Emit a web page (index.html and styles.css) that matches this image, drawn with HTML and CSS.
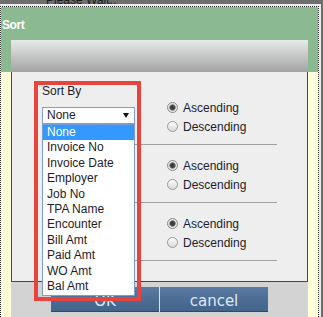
FILE: index.html
```html
<!DOCTYPE html>
<html>
<head>
    <title>Sort</title>
    <link rel="stylesheet" href="styles.css">
</head>
<body>
    <div class="wait"><span>Please Wait..</span></div>

    <div class="dialog">
        <div class="frame">
            <div class="head">
                <div class="title">Sort</div>
                <div class="titlebar"></div>
            </div>

            <div class="body">
                <div class="panel">
                    <div class="row first">
                        <div class="field">
                            <div class="label">Sort By</div>
                            <div class="select">None <span class="arrow"></span></div>
                        </div>
                        <div class="order">
                            <label><input type="radio" name="o1" checked>Ascending</label>
                            <label><input type="radio" name="o1">Descending</label>
                        </div>
                    </div>
                    <div class="row">
                        <div class="field"></div>
                        <div class="order">
                            <label><input type="radio" name="o2" checked>Ascending</label>
                            <label><input type="radio" name="o2">Descending</label>
                        </div>
                    </div>
                    <div class="row">
                        <div class="field"></div>
                        <div class="order">
                            <label><input type="radio" name="o3" checked>Ascending</label>
                            <label><input type="radio" name="o3">Descending</label>
                        </div>
                    </div>

                    <!-- open dropdown + highlight frame -->
                    <div class="callout"></div>
                    <ul class="options">
                        <li class="active">None</li>
                        <li>Invoice No</li>
                        <li>Invoice Date</li>
                        <li>Employer</li>
                        <li>Job No</li>
                        <li>TPA Name</li>
                        <li>Encounter</li>
                        <li>Bill Amt</li>
                        <li>Paid Amt</li>
                        <li>WO Amt</li>
                        <li>Bal Amt</li>
                    </ul>
                </div>

                <div class="buttons">
                    <button>OK</button>
                    <button class="cancel">cancel</button>
                </div>
            </div>
        </div>
    </div>
</body>
</html>
```

FILE: styles.css
```css
* { box-sizing: border-box; }
body { margin: 0; width: 323px; height: 317px; overflow: hidden; background: #6e6e6e; font-family: "Liberation Sans", Arial, sans-serif; font-size: 12px; color: #1c1c2a; }

.wait { height: 4px; overflow: hidden; padding-left: 46px; line-height: 14px; color: #1a1a1a; }
.wait span { display: block; margin-top: -7px; }

.dialog { width: 321px; padding: 2px 2px 0 0; background: #ececec; }
.frame { border: 1px dotted #222; border-bottom: 0; background: #ffffd8; height: 311px; }

.head { background: #8bba92; }
.title { height: 33px; padding: 11px 0 0 1px; color: #fff; font-weight: bold; line-height: 14px; letter-spacing: -0.4px; }
.titlebar { height: 32px; margin: 0 10px; background: linear-gradient(#e8e9e9, #a3a3a3); }

.body { margin: 0 10px; }
.panel { position: relative; background: #eeeeee; border: 1px solid #39475f; border-top: 0; padding: 0 0 20px 30px; }

.row { display: grid; grid-template-columns: 125px 1fr; width: 235px; height: 58px; border-bottom: 1px solid #a0a0a0; }
.row.first { height: 73px; }
.field { padding-top: 12px; }
.label { line-height: 14px; margin-bottom: 9px; }
.select { display: flex; justify-content: space-between; align-items: center; width: 93px; height: 17px; padding: 0 5px 0 4px; border: 1px solid #7b9cd4; background: #fff; line-height: 15px; }
.arrow { width: 0; height: 0; border-left: 3.5px solid transparent; border-right: 3.5px solid transparent; border-top: 5px solid #111; }

.order { padding-top: 11px; }
.first .order { padding-top: 26px; }
.order label { display: flex; align-items: center; height: 19px; }
.order input { appearance: none; -webkit-appearance: none; width: 11px; height: 11px; margin: 0 5px 0 0; border: 1px solid #9a9a9a; border-radius: 50%; background: linear-gradient(#fdfdfd, #d9d9d9); }
.order input:checked { background: radial-gradient(circle, #3f3f3f 0 2px, #7d7d7d 2.8px, #e2e2e2 3.6px, #f6f6f6 100%); border-color: #8a8a8a; }

.callout { position: absolute; left: 22px; top: 9px; width: 107px; height: 220px; border: 4px solid #e8443e; }
.options { position: absolute; left: 30px; top: 52px; width: 93px; margin: 0; padding: 0 0 1px; list-style: none; border: 1px solid #7b9cd4; background: #fff; }
.options li { height: 15.4px; line-height: 15.4px; padding-left: 4px; }
.options .active { background: #3399ff; color: #fff; }

.buttons { display: flex; height: 35px; padding: 5px 0 0 40px; background: #d3d3d3; }
.buttons button { width: 108px; height: 25px; padding: 4px 0 0; border: 0; border-bottom: 1px solid #30496a; background: linear-gradient(#5c7ba3, #4c6d95 50%, #43648b); color: #dfe9f4; font-family: "DejaVu Sans", sans-serif; font-size: 15px; line-height: 21px; }
.buttons .cancel { margin-left: 1px; box-shadow: -1px 0 0 #e4e4e4; }
```
